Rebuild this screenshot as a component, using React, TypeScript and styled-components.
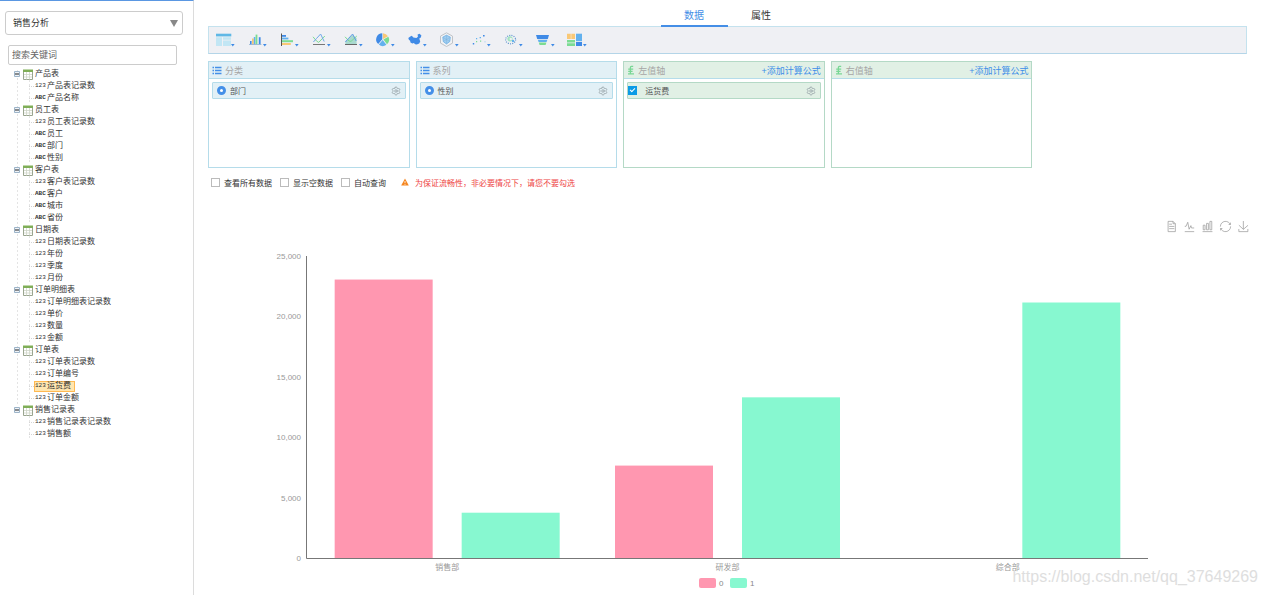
import React, { useState } from "react";
import styled, { createGlobalStyle, css } from "styled-components";
import { Settings } from "lucide-react";

const GlobalStyle = createGlobalStyle`
  *, *::before, *::after { box-sizing: border-box; }
  html, body { margin: 0; background: #fff; }
  body, button, input, select {
    font-family: "Liberation Sans", "Noto Sans CJK SC", sans-serif;
  }
`;

const Page = styled.div`
  position: relative;
  display: flex;
  min-height: 100vh;
  color: #333;
`;

/* ---------- sidebar ---------- */

const Sidebar = styled.aside`
  flex: 0 0 194px;
  padding: 10px 10px 0 5px;
  border-top: 1px solid #5a97e2;
  border-right: 1px solid #dcdcdc;
`;

const SelectBox = styled.div`
  position: relative;
`;

const SourceSelect = styled.select`
  display: block;
  width: 100%;
  height: 24px;
  padding: 0 7px;
  appearance: none;
  border: 1px solid #ccc;
  border-radius: 3px;
  background: #fff;
  color: #333;
  font-size: 9px;
`;

const SelectArrow = styled.svg`
  position: absolute;
  top: 9px;
  right: 5px;
  pointer-events: none;
`;

const SearchInput = styled.input`
  display: block;
  width: calc(100% - 9px);
  height: 20px;
  margin: 10px 0 3px 3px;
  padding: 0 3px;
  border: 1px solid #ccc;
  border-radius: 2px;
  color: #333;
  font-size: 9px;
  &::placeholder { color: #666; opacity: 1; }
`;

const Tree = styled.ul`
  margin: 0;
  padding: 0 0 0 9px;
  list-style: none;
  font-size: 8px;
  line-height: 12px;
`;

const TreeGroup = styled.li`
  background: linear-gradient(#e4e4e4 50%, transparent 50%) 3px 6px / 1px 4px repeat-y;
  &:last-child { background: none; }
`;

const GroupRow = styled.div`
  display: flex;
  align-items: center;
  height: 12px;
`;

const Toggle = styled.button`
  display: flex;
  width: 6px;
  height: 6px;
  margin-right: 3px;
  padding: 0;
  border: 0;
  background: none;
`;

const GroupName = styled.span`
  margin-left: 2px;
  white-space: nowrap;
`;

const Leaves = styled.ul`
  margin: 0;
  padding: 0 0 0 15px;
  list-style: none;
`;

const Leaf = styled.li`
  display: flex;
  align-items: center;
  height: 12px;
  background: linear-gradient(#e4e4e4 50%, transparent 50%) 0 0 / 1px 4px repeat-y;
  &::before {
    content: "";
    width: 5px;
    border-top: 1px dotted #d4d4d4;
  }
`;

const LeafLabel = styled.span<{ $selected?: boolean }>`
  display: flex;
  align-items: center;
  gap: 1px;
  height: 11px;
  padding: 0 3px 0 0;
  border: 1px solid transparent;
  white-space: nowrap;
  ${(p) =>
    p.$selected &&
    css`
      background: #ffe6b0;
      border-color: #ffb951;
    `}
`;

const TypeTag = styled.span<{ $text: boolean }>`
  width: 11px;
  font-family: "Liberation Mono", monospace;
  font-size: 6px;
  font-weight: ${(p) => (p.$text ? 700 : 400)};
`;

/* ---------- main column ---------- */

const Main = styled.main`
  flex: 1;
  min-width: 0;
`;

const Editor = styled.div`
  padding: 0 20px 0 14px;
`;

const Tabs = styled.nav`
  display: flex;
  justify-content: center;
  height: 27px;
  margin-bottom: -1px;
`;

const Tab = styled.button<{ $active?: boolean }>`
  width: 67px;
  padding: 4px 0 0;
  border: 0;
  border-bottom: 2px solid ${(p) => (p.$active ? "#448ee6" : "transparent")};
  background: none;
  color: ${(p) => (p.$active ? "#448ee6" : "#333")};
  font-size: 10px;
`;

const ChartBar = styled.div`
  display: flex;
  align-items: center;
  gap: 12px;
  height: 28px;
  padding: 0 7px;
  border: 1px solid #c4e2ee;
  border-bottom-color: #b4d5e8;
  background: #eff0f4;
`;

const ChartButton = styled.button`
  display: flex;
  padding: 0;
  border: 0;
  background: none;
`;

const Panels = styled.div`
  display: grid;
  grid-template-columns: repeat(5, 1fr);
  gap: 6px;
  padding: 7px 7px 0 0;
`;

type Tone = "blue" | "green";
const tones = {
  blue: { line: "#b5dcea", fill: "#e2f0f6" },
  green: { line: "#b4d9c6", fill: "#e1f0e5" },
};

const Panel = styled.section<{ $tone: Tone }>`
  height: 107px;
  border: 1px solid ${(p) => tones[p.$tone].line};
`;

const PanelHead = styled.header<{ $tone: Tone }>`
  display: flex;
  align-items: center;
  gap: 3px;
  height: 17px;
  padding: 0 3px;
  border-bottom: 1px solid #b5dcea;
  background: ${(p) => tones[p.$tone].fill};
  color: #a6a6a6;
  font-size: 9px;
`;

const FormulaLink = styled.a`
  margin-left: auto;
  color: #3d8ee8;
  text-decoration: none;
`;

const Field = styled.div<{ $tone: Tone }>`
  display: flex;
  align-items: center;
  height: 17px;
  margin: 3px;
  padding: 0 4px;
  border: 1px solid ${(p) => tones[p.$tone].line};
  border-radius: 1px;
  background: ${(p) => tones[p.$tone].fill};
  color: #555;
  font-size: 8px;
`;

const FieldLabel = styled.label`
  display: flex;
  flex: 1;
  align-items: center;
  gap: 4px;
`;

const Radio = styled.input`
  width: 9px;
  height: 9px;
  margin: 0;
  appearance: none;
  border: 3px solid #448fe8;
  border-radius: 50%;
  background: #fff;
`;

const MeasureCheck = styled.input`
  position: relative;
  width: 9px;
  height: 9px;
  margin: 0 4px 0 -4px;
  appearance: none;
  background: #0c9be6;
  &::after {
    content: "";
    position: absolute;
    top: 2px;
    left: 2px;
    width: 5px;
    height: 3px;
    border: solid #fff;
    border-width: 0 0 1px 1px;
    transform: rotate(-45deg);
  }
`;

const GearButton = styled.button`
  display: flex;
  padding: 0;
  border: 0;
  background: none;
  color: #98a3a8;
`;

const Options = styled.div`
  display: flex;
  align-items: center;
  gap: 8px;
  height: 12px;
  margin-top: 8px;
  padding-left: 3px;
  font-size: 8px;
`;

const Option = styled.label`
  display: flex;
  align-items: center;
  gap: 4px;
`;

const OptionBox = styled.input`
  width: 9px;
  height: 9px;
  margin: 0;
  appearance: none;
  border: 1px solid #bbb;
  background: #fff;
  &:checked { background: #0c9be6; }
`;

const Warning = styled.p`
  display: flex;
  align-items: center;
  gap: 6px;
  margin: 0 0 0 7px;
  color: #ee4444;
`;

const Toolbox = styled.div`
  display: flex;
  justify-content: flex-end;
  gap: 7px;
  margin: 33px 0 2px;
  padding-right: 18px;
`;

const ToolButton = styled.button`
  display: flex;
  padding: 0;
  border: 0;
  background: none;
`;

const Chart = styled.svg`
  display: block;
  width: 100%;
  height: auto;
  font-family: "Liberation Sans", "Noto Sans CJK SC", sans-serif;
  font-size: 8px;
`;

const Watermark = styled.div`
  position: absolute;
  right: 9px;
  bottom: 9px;
  color: #dedede;
  font-size: 16px;
  line-height: 18px;
  text-shadow: 1px 1px 0 #fff;
  pointer-events: none;
`;

/* ---------- data ---------- */

type Group = { name: string; leaves: [string, string][] };

const groups: Group[] = [
  { name: "产品表", leaves: [["123", "产品表记录数"], ["ABC", "产品名称"]] },
  { name: "员工表", leaves: [["123", "员工表记录数"], ["ABC", "员工"], ["ABC", "部门"], ["ABC", "性别"]] },
  { name: "客户表", leaves: [["123", "客户表记录数"], ["ABC", "客户"], ["ABC", "城市"], ["ABC", "省份"]] },
  { name: "日期表", leaves: [["123", "日期表记录数"], ["123", "年份"], ["123", "季度"], ["123", "月份"]] },
  { name: "订单明细表", leaves: [["123", "订单明细表记录数"], ["123", "单价"], ["123", "数量"], ["123", "金额"]] },
  { name: "订单表", leaves: [["123", "订单表记录数"], ["123", "订单编号"], ["123", "运货费"], ["123", "订单金额"]] },
  { name: "销售记录表", leaves: [["123", "销售记录表记录数"], ["123", "销售额"]] },
];

const series = [
  { name: "0", color: "#ff97b0", values: [23050, 7650, 0] },
  { name: "1", color: "#87f8d0", values: [3750, 13300, 21150] },
];
const departments = ["销售部", "研发部", "综合部"];

/* ---------- icons ---------- */

const B = "#3f8ae6";
const L = "#62b1ee";
const G = "#7bdc92";
const Y = "#f9c876";

const chartTypes: { name: string; art: React.ReactNode }[] = [
  {
    name: "表格",
    art: (
      <>
        <path d="M0 1.7h15.3v2.7H0z" fill="#5fb8e6" />
        <path d="M0 5.2h6V14H0zM7 5.2h8v2.6H7zM7 8.6h8V14H7z" fill="#c2e6f4" />
      </>
    ),
  },
  {
    name: "柱状图",
    art: (
      <>
        <path d="M2 9h1.6v3.4H2z" fill={B} />
        <path d="M4 6.5h1.8v5.9H4z" fill={Y} />
        <path d="M5.8 5h1.6v7.4H5.8z" fill={L} />
        <path d="M7.6 2.6h1.8v9.8H7.6z" fill={G} />
        <path d="M10.8 5.2h1.8v7.2h-1.8z" fill={B} />
        <path d="M1 12.5h12.4" stroke="#8fb0cf" strokeWidth=".8" />
      </>
    ),
  },
  {
    name: "条形图",
    art: (
      <>
        <path d="M1.5 1.5v12.5" stroke="#555" />
        <path d="M2 3h4v1.8H2z" fill={B} />
        <path d="M2 5.6h6.4v1.8H2z" fill={L} />
        <path d="M2 8.2h11v2H2z" fill={G} />
        <path d="M2 11h8.8v2H2z" fill={Y} />
      </>
    ),
  },
  {
    name: "折线图",
    art: (
      <>
        <path d="M1 4.8L4.5 9l2.2 1.4L12.8 4" stroke={G} fill="none" />
        <path d="M1.4 10L4.5 6.5 8.6 2l3.6 7.5" stroke="#6fa8e8" fill="none" />
        <path d="M1 12.5h12" stroke="#777" />
      </>
    ),
  },
  {
    name: "面积图",
    art: (
      <>
        <path d="M1.4 12L1.4 9 4.5 6 8.6 3l4 3v6z" fill="#a9d9cf" />
        <path d="M1 4.8L5 9l2 .4L12.8 4" stroke={G} fill="none" />
        <path d="M1.4 10L4.5 6.5 8.6 2l3.6 7" stroke="#5f9ce4" fill="none" />
        <path d="M1 12.5h12" stroke="#666" />
      </>
    ),
  },
  {
    name: "饼图",
    art: (
      <>
        <path d="M6.3 7.3V1.2A6.2 6.2 0 0 0 2.2 12z" fill={B} />
        <path d="M7 7V1.2a6.2 6.2 0 0 1 5 3.1z" fill={Y} />
        <path d="M7.4 7.6l5-2.8a6.2 6.2 0 0 1-1.4 7.4z" fill={G} />
        <path d="M6.7 8l3.7 4.8a6.2 6.2 0 0 1-7.6-.2z" fill={L} />
      </>
    ),
  },
  {
    name: "地图",
    art: (
      <path
        d="M.3 6l2-1.6 1.5-.7 1.6 1.8 3 .5 1.5-1.2-.3-2.4 2-.6 1.8 1.6-.6 2-1.5 1 .9 3-1 2-2.4 1-1.6-.1-1.4-1.2-1.5.5-1.8-1.2-.4-1.6L.9 7.8z"
        fill={B}
      />
    ),
  },
  {
    name: "雷达图",
    art: (
      <>
        <path d="M6.5.8l6 3.3v7l-6 3.4-6-3.4v-7z" fill="#f1f2f4" stroke="#bfc3c8" />
        <path d="M6.5 3.2l3.8 1.9-.5 4.4-3.3 2.5-3.2-2.4-.5-4.5z" fill="#9fcdf0" stroke="#6fb0e6" strokeWidth=".8" />
        <path d="M6.5 3v9M3 5.4l7 4.2M10 5.4l-7 4.2" stroke="#7fb2dc" strokeWidth=".5" />
      </>
    ),
  },
  {
    name: "散点图",
    art: (
      <>
        <path d="M.8 11h1.4v1.4H.8zM11 3h1.6v1.4H11z" fill={B} />
        <path d="M4 6h1.2v1.2H4zM7.6 5h1.4v1.2H7.6z" fill={L} />
        <path d="M4 9h1.2v1.2H4zM8 8.6h1.2v1.2H8z" fill={G} />
        <path d="M12.6 9.4h.8v.8h-.8z" fill={L} />
      </>
    ),
  },
  {
    name: "气泡图",
    art: (
      <>
        <ellipse cx="6.6" cy="7.6" rx="5" ry="4.2" fill="none" stroke="#5d94cf" strokeWidth="1.2" strokeDasharray="1 1.2" />
        <circle cx="6" cy="6.8" r="2.6" fill="#a2e3c0" />
        <circle cx="6.8" cy="7" r="1.2" fill="#eff0f4" />
        <circle cx="9" cy="9" r="1.2" fill={L} />
      </>
    ),
  },
  {
    name: "漏斗图",
    art: (
      <>
        <path d="M0 3h13l-1.2 4H1.2z" fill={B} />
        <path d="M1.8 7.8h9.6l-.8 2.2h-8z" fill={L} />
        <path d="M2.8 10.6h7.6l-.8 2.4H3.6z" fill={G} />
      </>
    ),
  },
  {
    name: "矩形树图",
    art: (
      <>
        <path d="M-1 1.7h3.8v5.4H-1zM3.3 1.7H7v5.4H3.3z" fill={Y} />
        <path d="M-1 8h8v2.4h-8zM-1 11.2h8V14h-8z" fill={G} />
        <path d="M8 1.7h6v7.5H8z" fill={L} />
        <path d="M8 10h6v4H8z" fill={B} />
      </>
    ),
  },
];

const tools = [
  { name: "数据视图", d: "M17.5,17.3H33M45.4,29.5h-28M11.5,2v56H51V14.8L38.4,2H11.5zM38.4,2.2v12.7H51M45.4,41.7h-28" },
  { name: "切换为折线图", d: "M4.1,28.9h7.1l9.3-22l7.4,38l9.7-19.7l3,12.8h14.9M4.1,58h51.4" },
  { name: "切换为柱状图", d: "M6.7,22.9h10V48h-10V22.9zM24.9,13h10v35h-10V13zM43.2,2h10v46h-10V2zM3.1,58h53.7" },
  { name: "还原", d: "M47,18.9h9.8V8.7M56.3,20.1C52.1,9,40.5,0.6,26.8,2.1C12.6,3.7,1.6,16.2,2.1,30.6M13,41.1H3.1v10.2M3.7,39.9c4.2,11.1,15.8,19.5,29.5,18c14.2-1.6,25.2-14.1,24.7-28.5" },
  { name: "保存为图片", d: "M4.7,22.9L29.3,45.5L54.7,23.4M4.6,43.6L4.6,58L53.8,58L53.8,43.6M29.2,45.1L29.2,0" },
];

const ListIcon = () => (
  <svg width="10" height="9" viewBox="0 0 10 9" aria-hidden="true">
    <path d="M.5 1.5h1.5M.5 4.5h1.5M.5 7.5h1.5M3 1.5h6.5M3 4.5h6.5M3 7.5h6.5" stroke="#448fe8" strokeWidth="1.4" />
  </svg>
);

const ValueIcon = () => (
  <svg width="8" height="10" viewBox="0 0 8 10" aria-hidden="true">
    <path d="M6.2 1.4H4.4Q3.4 1.4 3.4 2.6V8.4M1 8.8h6M1.2 4.2h5M1.2 6.4h4.4" fill="none" stroke="#79d795" strokeWidth="1.3" />
  </svg>
);

const TableIcon = () => (
  <svg width="10" height="11" viewBox="0 0 10 11" aria-hidden="true">
    <path d="M.5 1.5h9v9h-9z" fill="#fff" stroke="#9aa58f" />
    <path d="M3.5 3v7.5M6.5 3v7.5M1 5.5h8M1 8h8" stroke="#cfd6c8" strokeWidth=".8" />
    <path d="M0 .5h10V3H0z" fill="#7fae57" />
  </svg>
);

/* ---------- parts ---------- */

function TreeBranch({ group }: { group: Group }) {
  const [open, setOpen] = useState(true);
  return (
    <TreeGroup>
      <GroupRow>
        <Toggle aria-label={group.name} aria-expanded={open} onClick={() => setOpen(!open)}>
          <svg width="6" height="6" viewBox="0 0 6 6">
            <path d="M.5.5h5v5h-5z" fill="#eef3f8" stroke="#9db4c8" />
            <path d={open ? "M1 3h4" : "M1 3h4M3 1v4"} stroke="#222" />
          </svg>
        </Toggle>
        <TableIcon />
        <GroupName>{group.name}</GroupName>
      </GroupRow>
      {open && (
        <Leaves>
          {group.leaves.map(([tag, text]) => (
            <Leaf key={text}>
              <LeafLabel $selected={text === "运货费"}>
                <TypeTag $text={tag === "ABC"}>{tag}</TypeTag>
                {text}
              </LeafLabel>
            </Leaf>
          ))}
        </Leaves>
      )}
    </TreeGroup>
  );
}

function Gear({ label }: { label: string }) {
  return (
    <GearButton aria-label={label}>
      <Settings size={10} strokeWidth={2} />
    </GearButton>
  );
}

function BarChart() {
  const left = 113;
  const right = 954;
  const top = 22;
  const base = 324;
  const step = (right - left) / departments.length;
  const bar = 98;
  const gap = 29;
  const inset = (step - bar * 2 - gap) / 2;
  const scale = (base - top) / 25000;
  return (
    <Chart viewBox="0 0 1073 360" role="img" aria-label="运货费">
      {[0, 5000, 10000, 15000, 20000, 25000].map((v) => (
        <text key={v} x={left - 6} y={base - v * scale + 3} textAnchor="end" fill="#999">
          {v.toLocaleString("en-US")}
        </text>
      ))}
      {series.map((s, i) =>
        s.values.map((v, j) => (
          <rect
            key={s.name + j}
            x={left + j * step + inset + i * (bar + gap)}
            y={base - v * scale}
            width={bar}
            height={v * scale}
            fill={s.color}
          />
        ))
      )}
      <path d={`M${left - 0.5} ${top}V${base + 0.5}H${right}`} fill="none" stroke="#777" />
      {departments.map((d, j) => (
        <text key={d} x={left + (j + 0.5) * step} y={base + 12} textAnchor="middle" fill="#999">
          {d}
        </text>
      ))}
      {series.map((s, i) => (
        <g key={s.name}>
          <rect x={505 + i * 31} y={base + 20} width="17" height="10" rx="2" fill={s.color} />
          <text x={525 + i * 31} y={base + 28} fill="#888">
            {s.name}
          </text>
        </g>
      ))}
    </Chart>
  );
}

export default function App() {
  return (
    <Page>
      <GlobalStyle />
      <Sidebar>
        <SelectBox>
          <SourceSelect aria-label="数据源">
            <option>销售分析</option>
          </SourceSelect>
          <SelectArrow width="8" height="7" viewBox="0 0 8 7" aria-hidden="true">
            <path d="M0 0h8L4 7z" fill="#888" />
          </SelectArrow>
        </SelectBox>
        <SearchInput aria-label="搜索关键词" placeholder="搜索关键词" />
        <Tree>
          {groups.map((g) => (
            <TreeBranch key={g.name} group={g} />
          ))}
        </Tree>
      </Sidebar>

      <Main>
        <Editor>
          <Tabs>
            <Tab $active>数据</Tab>
            <Tab>属性</Tab>
          </Tabs>
          <ChartBar>
            {chartTypes.map((t) => (
              <ChartButton key={t.name} aria-label={t.name}>
                <svg width="20" height="16" viewBox="0 0 20 16" overflow="visible">
                  {t.art}
                  <path d="M15 12h3.6l-1.8 2.6z" fill={B} />
                </svg>
              </ChartButton>
            ))}
          </ChartBar>

          <Panels>
            <Panel $tone="blue">
              <PanelHead $tone="blue">
                <ListIcon />
                分类
              </PanelHead>
              <Field $tone="blue">
                <FieldLabel>
                  <Radio type="radio" name="category" defaultChecked />
                  部门
                </FieldLabel>
                <Gear label="部门设置" />
              </Field>
            </Panel>
            <Panel $tone="blue">
              <PanelHead $tone="blue">
                <ListIcon />
                系列
              </PanelHead>
              <Field $tone="blue">
                <FieldLabel>
                  <Radio type="radio" name="series" defaultChecked />
                  性别
                </FieldLabel>
                <Gear label="性别设置" />
              </Field>
            </Panel>
            <Panel $tone="green">
              <PanelHead $tone="green">
                <ValueIcon />
                左值轴
                <FormulaLink href="#left-formula">+添加计算公式</FormulaLink>
              </PanelHead>
              <Field $tone="green">
                <FieldLabel>
                  <MeasureCheck type="checkbox" defaultChecked />
                  运货费
                </FieldLabel>
                <Gear label="运货费设置" />
              </Field>
            </Panel>
            <Panel $tone="green">
              <PanelHead $tone="green">
                <ValueIcon />
                右值轴
                <FormulaLink href="#right-formula">+添加计算公式</FormulaLink>
              </PanelHead>
            </Panel>
          </Panels>

          <Options>
            {["查看所有数据", "显示空数据", "自动查询"].map((o) => (
              <Option key={o}>
                <OptionBox type="checkbox" />
                {o}
              </Option>
            ))}
            <Warning>
              <svg width="8" height="8" viewBox="0 0 8 8" aria-hidden="true">
                <path d="M4 .5L7.8 7.5H.2z" fill="#f5861f" />
                <path d="M4 3v2.2M4 6v.8" stroke="#fff" strokeWidth=".8" />
              </svg>
              为保证流畅性，非必要情况下，请您不要勾选
            </Warning>
          </Options>
        </Editor>

        <Toolbox>
          {tools.map((t) => (
            <ToolButton key={t.name} aria-label={t.name}>
              <svg width="11" height="11" viewBox="0 0 60 60" overflow="visible">
                <path d={t.d} fill="none" stroke="#999" strokeWidth="4" />
              </svg>
            </ToolButton>
          ))}
        </Toolbox>
        <BarChart />
      </Main>
      <Watermark>https://blog.csdn.net/qq_37649269</Watermark>
    </Page>
  );
}
